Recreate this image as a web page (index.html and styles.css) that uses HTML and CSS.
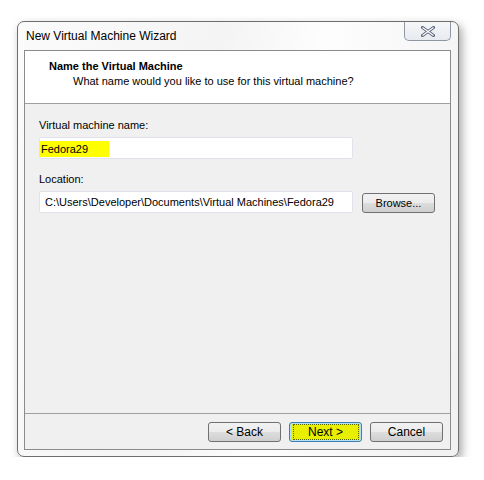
FILE: index.html
```html
<!DOCTYPE html>
<html>
<head>
<meta charset="utf-8">
<link rel="stylesheet" href="styles.css">
</head>
<body>
<div class="window">
  <div class="titlebar">
    <span class="title">New Virtual Machine Wizard</span>
    <div class="close">
      <svg width="14" height="11" viewBox="0 0 14 11">
        <path d="M1.5 1.5 L12.5 9.5 M12.5 1.5 L1.5 9.5" stroke="#5a6478" stroke-width="3" stroke-linecap="square" fill="none"/>
        <path d="M1.5 1.5 L12.5 9.5 M12.5 1.5 L1.5 9.5" stroke="#ffffff" stroke-width="1.2" fill="none"/>
      </svg>
    </div>
  </div>
  <div class="panel">
    <div class="header">
      <div class="h-title">Name the Virtual Machine</div>
      <div class="h-sub">What name would you like to use for this virtual machine?</div>
    </div>
    <div class="content">
      <div class="label">Virtual machine name:</div>
      <div class="row">
        <div class="field"><span class="hl">Fedora29</span></div>
      </div>
      <div class="label loc">Location:</div>
      <div class="row">
        <div class="field">C:\Users\Developer\Documents\Virtual Machines\Fedora29</div>
        <div class="btn browse">Browse...</div>
      </div>
    </div>
    <div class="footer">
      <div class="btn">&lt; Back</div>
      <div class="btn next"><span class="next-hl">Next &gt;</span></div>
      <div class="btn">Cancel</div>
    </div>
  </div>
</div>
</body>
</html>
```

FILE: styles.css
```css
html, body {
  margin: 0;
  padding: 0;
  background: #ffffff;
}
body {
  padding: 21px 0 0 17px;
  font-family: "Liberation Sans", Arial, sans-serif;
  font-size: 11px;
  color: #000;
}
.window {
  width: 440px;
  height: 434px;
  border: 1px solid #6e6e6e;
  border-radius: 7px;
  background: linear-gradient(100deg, #fbfbfb 0%, #f4f4f4 40%, #fdfdfd 60%, #f1f1f1 100%);
  box-shadow: 3px 4px 10px rgba(0,0,0,0.35);
  display: flex;
  flex-direction: column;
}
.titlebar {
  height: 28px;
  display: flex;
  justify-content: space-between;
  align-items: flex-start;
  padding: 0 7px 0 8px;
}
.title {
  margin-top: 7px;
  line-height: 14px;
  font-size: 12px;
  color: #000;
}
.close {
  width: 45px;
  height: 18px;
  border: 1px solid #8f97a3;
  border-top: none;
  border-radius: 0 0 5px 5px;
  background: linear-gradient(#f6f7f9, #e7eaef);
  display: flex;
  justify-content: center;
  align-items: center;
}
.panel {
  margin: 0 7px 0 6px;
  height: 398px;
  border: 1px solid #8b8b8b;
  background: #f0f0f0;
  display: flex;
  flex-direction: column;
}
.header {
  height: 53px;
  background: #ffffff;
  border-bottom: 1px solid #a0a0a0;
  box-sizing: border-box;
  padding: 8px 0 0 24px;
}
.h-title {
  font-weight: bold;
  line-height: 15px;
}
.h-sub {
  padding-left: 24px;
  line-height: 15px;
}
.content {
  flex: 1;
  padding: 14px 0 0 14px;
}
.label {
  line-height: 15px;
  color: #000;
}
.label.loc {
  margin-top: 13px;
}
.row {
  display: flex;
  align-items: center;
  margin-top: 4px;
  gap: 9px;
}
.field {
  width: 307px;
  height: 20px;
  border: 1px solid #e2e3ea;
  border-radius: 2px;
  background: #ffffff;
  padding-left: 5px;
  line-height: 20px;
  white-space: nowrap;
  overflow: hidden;
}
.hl {
  display: inline-block;
  background: #ffff00;
  margin-left: -12px;
  padding: 0 21px 0 8px;
  line-height: 16px;
  vertical-align: middle;
}
.btn {
  width: 71px;
  height: 18px;
  border: 1px solid #707070;
  border-radius: 3px;
  background: linear-gradient(#f2f2f2 0%, #ebebeb 50%, #dddddd 51%, #cfcfcf 100%);
  display: flex;
  justify-content: center;
  align-items: center;
  line-height: 14px;
  white-space: nowrap;
  font-size: 12px;
}
.browse {
  margin-top: 1px;
  font-size: 11px;
}
.footer {
  height: 27px;
  border-top: 1px solid #a0a0a0;
  display: flex;
  justify-content: flex-end;
  align-items: flex-start;
  gap: 8px;
  padding: 8px 7px 0 0;
}
.next {
  border-color: #3c7fb1;
  background: #e8f000;
  box-shadow: inset 0 0 0 1px #b6e0f7;
}
.next-hl {
  display: flex;
  align-items: center;
  justify-content: center;
  width: 64px;
  height: 14px;
  border: 1px dotted #556600;
}
```
